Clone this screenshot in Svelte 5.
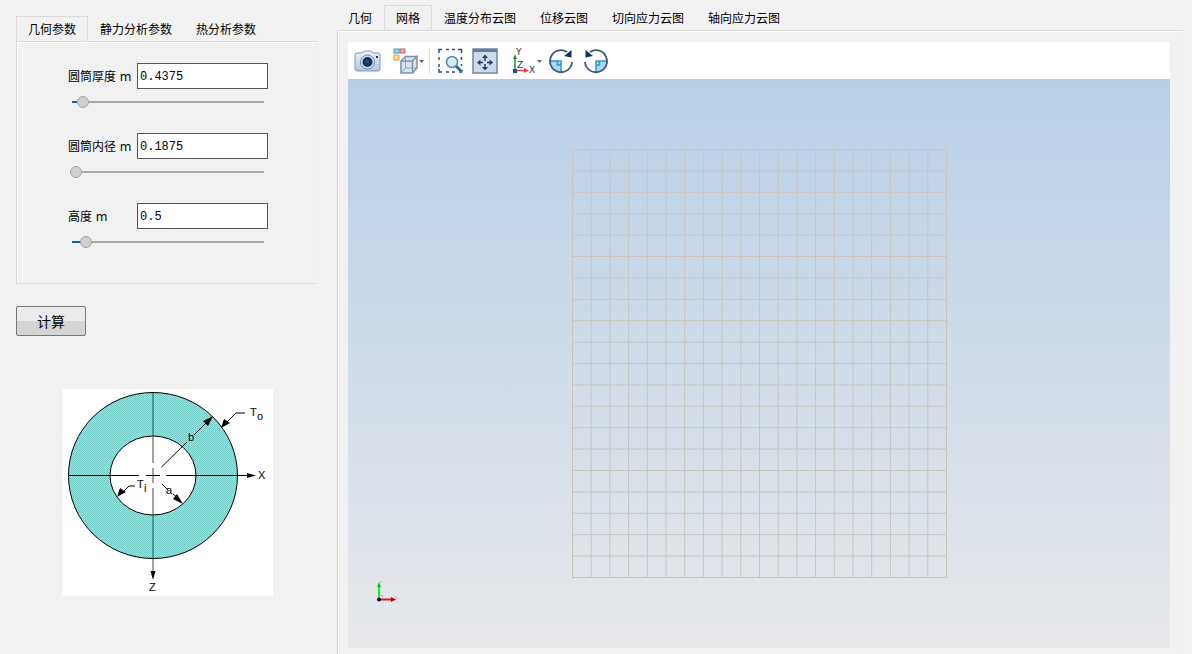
<script lang="ts">
  interface Field {
    id: string;
    label: string;
    value: string;
    slider: number;
  }

  const paramTabs = ['几何参数', '静力分析参数', '热分析参数'];
  const viewTabs = ['几何', '网格', '温度分布云图', '位移云图', '切向应力云图', '轴向应力云图'];

  let activeParam = $state(0);
  let activeView = $state(1);

  let fields = $state<Field[]>([
    { id: 'thickness', label: '圆筒厚度 m', value: '0.4375', slider: 36 },
    { id: 'inner', label: '圆筒内径 m', value: '0.1875', slider: 0 },
    { id: 'height', label: '高度 m', value: '0.5', slider: 52 },
  ]);

  const cells = 20;
  const meshW = 374;
  const meshH = 428;
  const lines = Array.from({ length: cells + 1 }, (_, i) => i / cells);
</script>

<main class="app">
  <section class="side">
    <div class="tabs" role="tablist">
      {#each paramTabs as tab, i}
        <button class="tab" class:active={activeParam === i} role="tab" aria-selected={activeParam === i} onclick={() => (activeParam = i)}>{tab}</button>
      {/each}
    </div>
    <div class="panel params">
      {#each fields as field}
        <div class="field">
          <div class="row">
            <label for={field.id}>{field.label}</label>
            <input id={field.id} class="text" type="text" bind:value={field.value} />
          </div>
          <input
            class="slider"
            type="range"
            min="0"
            max="1000"
            aria-label={field.label}
            bind:value={field.slider}
            style="--fill: {field.slider / 10}%"
          />
        </div>
      {/each}
    </div>

    <button class="compute">计算</button>

    <svg class="diagram" width="211" height="207" viewBox="0 0 211 207">
      <defs>
        <pattern id="dots" width="2" height="2" patternUnits="userSpaceOnUse">
          <rect width="2" height="2" fill="#74cbc5" />
          <rect width="1" height="1" fill="#bcdcd9" />
          <rect x="1" y="1" width="1" height="1" fill="#a6d8d4" />
        </pattern>
      </defs>
      <rect width="211" height="207" fill="#fff" />
      <ellipse cx="91" cy="86.5" rx="84.5" ry="83" fill="url(#dots)" stroke="#000" />
      <ellipse cx="91" cy="86.5" rx="43" ry="39.5" fill="#fff" stroke="#000" />
      <g stroke="#000" fill="none">
        <path d="M7 86.5H77M84 86.5H98M104 86.5H187" />
        <path d="M91 4V47M91 126V170" stroke="#174e5c" />
        <path d="M91 47V74M91 79V94M91 99V126M91 170V182" stroke="#4c4638" />
        <path d="M99.5 78 125 53M132 46 144 34M183 24H174L164 34M73 97H67L60 104M100 95 106 101M111 105 118 111" />
      </g>
      <g fill="#000">
        <path d="M194 86.5 185 84V89Z" />
        <path d="M91 191 88.5 182H93.5Z" />
        <path d="M151 27 146 37 141 32Z" />
        <path d="M159 39 162 30 168 34Z" />
        <path d="M55 108 58 99 64 103Z" />
        <path d="M121 115 111 110 115 105Z" />
      </g>
      <g class="marks">
        <text x="196" y="90">X</text>
        <text x="87" y="202">Z</text>
        <text x="188" y="27">T</text>
        <text x="195" y="31">o</text>
        <text x="75" y="99">T</text>
        <text x="82" y="103">i</text>
        <text x="126" y="52">b</text>
        <text x="104" y="105">a</text>
      </g>
    </svg>
  </section>

  <section class="view">
    <div class="tabs" role="tablist">
      {#each viewTabs as tab, i}
        <button class="tab" class:active={activeView === i} role="tab" aria-selected={activeView === i} onclick={() => (activeView = i)}>{tab}</button>
      {/each}
    </div>
    <div class="panel stage">
      <div class="toolbar">
        <button class="tool" aria-label="截图">
          <svg width="28" height="28" viewBox="0 0 28 28">
            <defs>
              <linearGradient id="cam" x1="0" y1="0" x2="0" y2="1">
                <stop offset="0" stop-color="#edf4fb" />
                <stop offset="1" stop-color="#a9c6e2" />
              </linearGradient>
            </defs>
            <path d="M4 6H9L11 4H18L20 6H25Q27 6 27 8V22Q27 24 25 24H4Q2 24 2 22V8Q2 6 4 6Z" fill="url(#cam)" stroke="#8097b5" />
            <circle cx="14.5" cy="15" r="7" fill="#cfdfee" stroke="#6d8aae" />
            <circle cx="14.5" cy="15" r="5" fill="#17305f" />
            <circle cx="14" cy="14.5" r="2" fill="#2c4978" />
            <rect x="23" y="9" width="2" height="2" fill="#17305f" />
          </svg>
        </button>
        <button class="tool wide" aria-label="视图方向">
          <svg width="34" height="28" viewBox="-2 0 34 28">
            <rect x="4" y="2" width="5" height="4" fill="#9fd6f2" stroke="#3f93c4" />
            <rect x="10" y="2" width="5" height="4" fill="#efaaaa" stroke="#c46060" />
            <rect x="4" y="8" width="5" height="5" fill="#ffdca0" stroke="#ee9836" />
            <path d="M10.500 14 15 9H27.500V21L23 26H10.500Z" fill="#dbe4ee" />
            <path d="M15.500 10V21L11 26M15.500 21H27" fill="none" stroke="#58b6e4" />
            <path d="M11 14H22.500V26H11ZM22.500 14 27 9.500V21L22.500 26M11 14 15.500 9.500H27" fill="none" stroke="#8090a8" stroke-width="1.5" />
            <path d="M29 13H34L31.500 16Z" fill="#666" />
          </svg>
        </button>
        <span class="divider"></span>
        <button class="tool" aria-label="框选缩放">
          <svg width="28" height="28" viewBox="0 0 28 28">
            <path d="M2 6V2.500H5M9 2.500H12M15 2.500H18M21 2.500H24.500V6M2 10V13M2 17V20M24.500 10V13M24.500 17V19M2 22V25H5M9 25H12M15 25H18M22 25H24.500V24" fill="none" stroke="#354c76" stroke-width="1.5" />
            <path d="M19 19 25 25" stroke="#246da5" stroke-width="3" />
            <circle cx="15" cy="15" r="5.5" fill="#d3eefb" stroke="#5688b3" stroke-width="1.5" />
          </svg>
        </button>
        <button class="tool" aria-label="适应窗口">
          <svg width="28" height="28" viewBox="0 0 28 28">
            <rect x="1" y="2" width="24" height="24" fill="#ccdae9" stroke="#7386a6" stroke-width="1.5" />
            <path d="M1 3.500H25" stroke="#657ba0" stroke-width="3" />
            <path d="M13 9V14M13 17V22M6 15.500H11M15 15.500H20" stroke="#263c66" stroke-width="1.5" />
            <path d="M13 7.500 10 11H16ZM13 23.500 10 20H16ZM5 15.500 8.500 12.500V18.500ZM21 15.500 17.500 12.500V18.500Z" fill="#263c66" />
          </svg>
        </button>
        <button class="tool wide" aria-label="坐标轴">
          <svg width="34" height="28" viewBox="-2 0 34 28">
            <path d="M6 24V11" stroke="#169447" stroke-width="1.5" />
            <path d="M6 7 4 12H8Z" fill="#169447" />
            <path d="M7 23.500H16" stroke="#f03b3b" stroke-width="1.5" />
            <path d="M20 23.500 15 21V26Z" fill="#f03b3b" />
            <rect x="4" y="22" width="4" height="4" fill="#2146ab" />
            <text class="axis" x="7" y="8">Y</text>
            <text class="axis" x="8" y="21">Z</text>
            <text class="axis" x="20" y="26">X</text>
            <path d="M28 13H33L30.500 16Z" fill="#666" />
          </svg>
        </button>
        {#each ['顺时针旋转', '逆时针旋转'] as name, i}
          <button class="tool" aria-label={name}>
            <svg width="28" height="28" viewBox="1 0 28 28">
              <g transform={i ? 'translate(28 0) scale(-1 1)' : undefined}>
                <path d="M3 14H14V25A11 11 0 0 1 3 14Z" fill="#a5dbf4" />
                <path d="M3 14H14V25M10.500 14V18H14" fill="none" stroke="#3398cc" stroke-width="1.5" />
                <path d="M20 5A11 11 0 1 0 25 15" fill="none" stroke="#40577d" stroke-width="1.8" />
                <path d="M24.500 3V10.500L17 9Z" fill="#162f60" />
              </g>
            </svg>
          </button>
        {/each}
      </div>
      <div class="canvas">
        <svg class="mesh" width="375" height="429" viewBox="0 0 375 429">
          {#each lines as t}
            <path d="M{t * meshW + 0.5} 0V{meshH + 1}M0 {t * meshH + 0.5}H{meshW + 1}" />
          {/each}
        </svg>
        <svg class="triad" width="24" height="24" viewBox="0 0 24 24">
          <path d="M4 20V4" stroke="#0f0" stroke-width="2" />
          <path d="M4 2 2 7H6Z" fill="#16b52f" />
          <path d="M5 19.500H17" stroke="#ef1010" stroke-width="2" />
          <path d="M21 19.500 16 17V22Z" fill="#c40000" />
          <path d="M5 15.500H8V17" fill="none" stroke="#aab2f2" />
          <path d="M5 1 7 3M7 1 5 3" stroke="#9de5ad" />
          <path d="M19 16 22 19M22 16 19 19" stroke="#f1a5a5" />
          <circle cx="4" cy="19.5" r="2" fill="#000050" />
        </svg>
      </div>
    </div>
  </section>
</main>

<style>
  :global(body) {
    background: #f1f1f1;
  }
  .app {
    display: grid;
    grid-template-columns: 336px 1fr;
    min-height: 100vh;
    color: #000;
    font-family: 'Noto Sans CJK SC', sans-serif;
    font-size: 12px;
  }
  button {
    margin: 0;
    color: inherit;
    font: inherit;
  }
  .side {
    padding: 16px 19px 0 16px;
  }
  .tabs {
    display: flex;
  }
  .tab {
    box-sizing: border-box;
    height: 25px;
    padding: 0 11px;
    border: 1px solid transparent;
    border-bottom: 0;
    background: none;
    line-height: 24px;
    white-space: nowrap;
  }
  .tab.active {
    border-color: #d9d9d9;
  }
  .panel {
    border: 1px solid #d9d9d9;
    border-right-color: #eee;
    box-shadow: inset 1px 1px #fff;
  }
  .params {
    box-sizing: border-box;
    display: flex;
    flex-direction: column;
    gap: 25px;
    padding: 21px 48px 35px 51px;
  }
  .field {
    display: flex;
    flex-direction: column;
    gap: 7px;
  }
  .row {
    display: grid;
    grid-template-columns: 69px 131px;
    align-items: center;
  }
  label {
    padding-bottom: 2px;
    font-family: 'DejaVu Sans', 'Noto Sans CJK SC', sans-serif;
    white-space: nowrap;
  }
  .text {
    box-sizing: border-box;
    width: 100%;
    height: 26px;
    padding: 2px 2px 0;
    border: 1px solid #555;
    background: #fff;
    color: #000;
    font-family: 'Liberation Mono', monospace;
    font-size: 12px;
  }
  .slider {
    appearance: none;
    width: 196px;
    height: 12px;
    margin: 0 2px;
    background:
      linear-gradient(#0067c0, #0067c0) 2px 5px / calc(var(--fill) + 2px) 2px no-repeat,
      linear-gradient(#a9a9a9, #a9a9a9) 2px 5px / 192px 2px no-repeat;
  }
  .slider::-webkit-slider-thumb {
    appearance: none;
    box-sizing: border-box;
    width: 12px;
    height: 12px;
    border: 1px solid #a3a3a3;
    border-radius: 50%;
    background: #d0d0d0;
  }
  .compute {
    display: block;
    box-sizing: border-box;
    width: 70px;
    height: 30px;
    margin-top: 22px;
    padding: 0;
    border: 1px solid #777;
    border-radius: 2px;
    background: linear-gradient(#ebebeb 50%, #d4d4d4 50%);
    font-size: 14px;
    line-height: 28px;
  }
  .diagram {
    display: block;
    margin: 53px 0 0 46px;
  }
  .marks {
    font-family: 'Liberation Sans', sans-serif;
    font-size: 11px;
  }
  .view {
    display: flex;
    flex-direction: column;
    min-width: 0;
    padding: 5px 9px 0 0;
  }
  .stage {
    display: flex;
    flex: 1;
    flex-direction: column;
    margin-left: 1px;
    padding: 11px 12px 6px 10px;
    border-bottom: 0;
  }
  .toolbar {
    display: flex;
    align-items: center;
    gap: 7px;
    height: 37px;
    padding: 0 5px;
    background: #fff;
  }
  .tool {
    width: 28px;
    height: 28px;
    padding: 0;
    border: 0;
    background: none;
  }
  .tool.wide {
    width: 34px;
  }
  .tool svg {
    display: block;
    overflow: visible;
  }
  .divider {
    width: 1px;
    height: 26px;
    background: #ddd;
  }
  .axis {
    fill: #333;
    font-family: 'DejaVu Sans', sans-serif;
    font-size: 9px;
  }
  .canvas {
    position: relative;
    display: flex;
    flex: 1;
    align-items: center;
    justify-content: center;
    background: linear-gradient(#b9cee6, #d0dce9 50%, #e7e8eb);
  }
  .mesh {
    fill: none;
    stroke: #c8c4bd;
  }
  .triad {
    position: absolute;
    bottom: 44px;
    left: 27px;
  }
</style>
